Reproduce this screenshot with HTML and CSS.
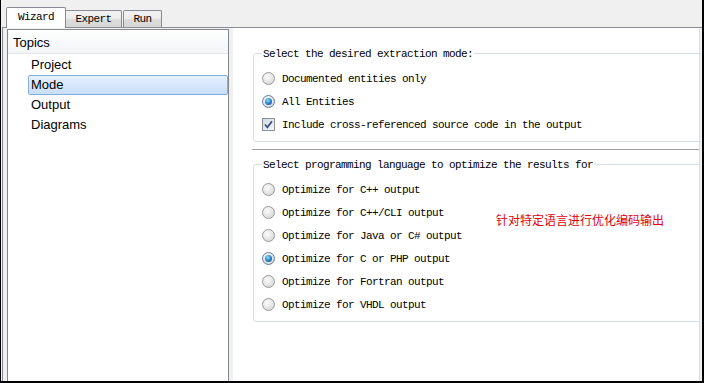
FILE: index.html
```html
<!DOCTYPE html>
<html lang="en">
<head>
  <meta charset="UTF-8" />
  <meta name="viewport" content="width=device-width, initial-scale=1.0"/>
  <title>Doxywizard - Mode</title>
  <link rel="stylesheet" href="styles.css">
</head>
<body>
  <div class="window">
    <div class="tabbar">
      <div class="tab active">Wizard</div>
      <div class="tab">Expert</div>
      <div class="tab last">Run</div>
    </div>

    <div class="pane">
      <div class="topics">
        <div class="topics-head">Topics</div>
        <ul class="topic-list">
          <li>Project</li>
          <li class="selected">Mode</li>
          <li>Output</li>
          <li>Diagrams</li>
        </ul>
      </div>

      <div class="page">
        <div class="group first">
          <div class="group-title">Select the desired extraction mode:</div>
          <div class="opts">
            <div class="opt"><span class="radio"></span>Documented entities only</div>
            <div class="opt"><span class="radio on"></span>All Entities</div>
            <div class="opt">
              <span class="check">
                <svg width="11" height="11" viewBox="0 0 11 11"><path d="M2 5.5 L4.4 8.3 L9 2.2" fill="none" stroke="#3d5286" stroke-width="1.8"/></svg>
              </span>Include cross-referenced source code in the output
            </div>
          </div>
        </div>

        <div class="sep"></div>

        <div class="group">
          <div class="group-title">Select programming language to optimize the results for</div>
          <div class="opts">
            <div class="opt"><span class="radio"></span>Optimize for C++ output</div>
            <div class="opt"><span class="radio"></span>Optimize for C++/CLI output</div>
            <div class="opt"><span class="radio"></span>Optimize for Java or C# output</div>
            <div class="opt"><span class="radio on"></span>Optimize for C or PHP output</div>
            <div class="opt"><span class="radio"></span>Optimize for Fortran output</div>
            <div class="opt"><span class="radio"></span>Optimize for VHDL output</div>
          </div>
          <div class="note">针对特定语言进行优化编码输出</div>
        </div>
      </div>
    </div>
  </div>
</body>
</html>
```

FILE: styles.css
```css
* {
  box-sizing: border-box;
}

body {
  margin: 0;
  background: #fff;
}

.window {
  width: 704px;
  height: 383px;
  display: flex;
  flex-direction: column;
  background: #f0f0f0;
  border-left: 1px solid #000;
  border-right: 2px solid #000;
  border-bottom: 2px solid #000;
  font-family: "Liberation Mono", "DejaVu Sans Mono", monospace;
  font-size: 11px;
  letter-spacing: -0.6px;
  color: #000;
}

/* tabs */
.tabbar {
  height: 27px;
  display: flex;
  align-items: flex-end;
  padding-left: 5px;
}

.tab {
  height: 17px;
  width: 57px;
  margin-left: -1px;
  border: 1px solid #898c95;
  border-bottom: none;
  border-radius: 2px 2px 0 0;
  background: linear-gradient(#f2f2f2, #ebebeb 50%, #dddddd 51%, #d6d6d6);
  display: flex;
  align-items: center;
  justify-content: center;
  line-height: 14px;
}

.tab.active {
  height: 21px;
  width: 60px;
  margin-left: 0;
  margin-bottom: -1px;
  background: #fff;
  position: relative;
  z-index: 1;
  padding-bottom: 2px;
}

.tab.last {
  width: 39px;
  margin-left: 1px;
}

.pane {
  flex: 1;
  display: flex;
  margin-left: 1px;
  border-top: 1px solid #898c95;
  border-left: 1px solid #898c95;
  padding: 1px 1px 0 4px;
  min-height: 0;
}

/* left topics tree */
.topics {
  width: 222px;
  border: 1px solid #828790;
  border-bottom: none;
  background: #fff;
  font-family: "Liberation Sans", Arial, sans-serif;
  font-size: 13px;
  letter-spacing: 0;
}

.topics-head {
  height: 24px;
  line-height: 20px;
  padding: 3px 0 0 5px;
  background: linear-gradient(#ffffff, #f3f4f6);
  border-bottom: 1px solid #e3e6ea;
}

.topic-list {
  list-style: none;
  margin: 1px 0 0 20px;
  padding: 0;
}

.topic-list li {
  height: 20px;
  line-height: 20px;
  padding-left: 3px;
}

.topic-list li.selected {
  background: linear-gradient(#e6f0fd, #c9defa);
  border: 1px solid #84acdd;
  border-radius: 2px;
  line-height: 18px;
  padding-left: 2px;
}

/* right page */
.page {
  flex: 1;
  margin: -1px 1px 0 4px;
  background: #fff;
  border-right: 1px solid #dcdcdc;
  padding-left: 20px;
  overflow: hidden;
}

.group {
  margin-top: 13px;
  margin-right: -24px;
  border: 1px solid #d5dfe5;
  border-radius: 3px;
  padding: 0 0 5px 8px;
  position: relative;
}

.group.first {
  margin-top: 25px;
}

.group-title {
  width: fit-content;
  margin: -7px 0 0 0;
  padding: 0 1px;
  line-height: 14px;
  background: #fff;
}

.opts {
  margin-top: 6px;
}

.opt {
  height: 23px;
  display: flex;
  align-items: center;
  gap: 7px;
  white-space: nowrap;
}

.radio {
  flex: none;
  width: 13px;
  height: 13px;
  border-radius: 50%;
  border: 1px solid #9a9a9a;
  background: radial-gradient(circle at 40% 35%, #fbfbfb, #e4e4e4 55%, #cdcdcd);
  display: grid;
  place-items: center;
}

.radio.on {
  border-color: #5b7fa6;
}

.radio.on::after {
  content: "";
  width: 7px;
  height: 7px;
  border-radius: 50%;
  background: radial-gradient(circle at 40% 35%, #8fdcff, #2f86c9 50%, #0c3d70);
}

.check {
  flex: none;
  width: 13px;
  height: 13px;
  border: 1px solid #8e8f8f;
  background: linear-gradient(135deg, #cfdbe7, #f4f7fa);
  display: grid;
  place-items: center;
}

.check svg {
  display: block;
}

.sep {
  height: 2px;
  margin: 7px 0 0 -1px;
  border-top: 1px solid #a0a0a0;
  background: #fff;
}

.note {
  position: absolute;
  left: 242px;
  top: 47px;
  font-family: "Noto Sans CJK SC", sans-serif;
  font-size: 12px;
  line-height: 16px;
  letter-spacing: 0;
  color: #e0000b;
}
```
